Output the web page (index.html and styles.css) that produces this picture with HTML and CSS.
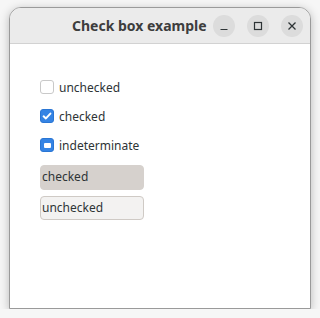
FILE: index.html
```html
<!DOCTYPE html>
<html lang="en">
  <head>
    <meta charset="UTF-8" />
    <title>Check box example</title>
    <link rel="stylesheet" href="styles.css">
  </head>
  <body>
    <div class="window">
      <div class="titlebar">
        <span class="title">Check box example</span>
        <div class="controls">
          <span class="ctl">
            <svg width="10" height="10" viewBox="0 0 10 10"><path d="M1.5 8.5h7" stroke="#2e3436" stroke-width="1.2"/></svg>
          </span>
          <span class="ctl">
            <svg width="10" height="10" viewBox="0 0 10 10"><rect x="1.5" y="1.5" width="7" height="7" fill="none" stroke="#2e3436" stroke-width="1.2"/></svg>
          </span>
          <span class="ctl">
            <svg width="10" height="10" viewBox="0 0 10 10"><path d="M1.5 1.5l7 7M8.5 1.5l-7 7" stroke="#2e3436" stroke-width="1.3"/></svg>
          </span>
        </div>
      </div>
      <div class="content">
        <div class="check-row">
          <span class="box"></span>
          <span class="label">unchecked</span>
        </div>
        <div class="check-row">
          <span class="box on">
            <svg width="14" height="14" viewBox="0 0 14 14"><path d="M3.6 7.3l2.3 2.1 4.5-4.8" fill="none" stroke="#fff" stroke-width="2" stroke-linecap="round" stroke-linejoin="round"/></svg>
          </span>
          <span class="label">checked</span>
        </div>
        <div class="check-row">
          <span class="box on">
            <span class="dash"></span>
          </span>
          <span class="label">indeterminate</span>
        </div>
        <div class="toggle pressed">checked</div>
        <div class="toggle">unchecked</div>
      </div>
    </div>
  </body>
</html>
```

FILE: styles.css
```css
body {
  margin: 0;
  padding: 7px 0 0 9px;
  background: #f6f6f6;
  font-family: "Noto Sans", sans-serif;
  color: #2e3436;
}
.window {
  width: 300px;
  height: 300px;
  border: 1px solid #9a9a9a;
  border-radius: 12px 12px 0 0;
  background: #fff;
  box-shadow: 0 2px 10px rgba(0, 0, 0, 0.25);
  overflow: hidden;
}
.titlebar {
  height: 35px;
  background: #ebebeb;
  border-bottom: 1px solid #d2d2d2;
  display: flex;
  align-items: center;
}
.title {
  font-weight: bold;
  font-size: 14px;
  margin-left: 62px;
  color: #3d3d3d;
}
.controls {
  display: flex;
  gap: 12px;
  margin-left: 6px;
}
.ctl {
  width: 22px;
  height: 22px;
  border-radius: 50%;
  background: #dcdcdc;
  display: flex;
  align-items: center;
  justify-content: center;
}
.content {
  padding: 36px 0 0 30px;
}
.check-row {
  display: flex;
  align-items: center;
  height: 14px;
  margin-bottom: 15px;
}
.box {
  flex: none;
  width: 14px;
  height: 14px;
  border: 1px solid #c9c9c9;
  border-radius: 3px;
  box-sizing: border-box;
  display: flex;
  align-items: center;
  justify-content: center;
  margin-right: 5px;
}
.box.on {
  background: #3584e4;
  border-color: #2a76d4;
}
.box svg {
  flex: none;
}
.dash {
  width: 7px;
  height: 5px;
  background: #fff;
  border-radius: 1px;
}
.label {
  font-size: 12px;
}
.toggle {
  width: 104px;
  height: 24px;
  box-sizing: border-box;
  border: 1px solid #cfcac5;
  border-radius: 4px;
  background: #f3f2f1;
  font-size: 12px;
  line-height: 22px;
  padding-left: 1px;
  margin-bottom: 6px;
}
.toggle.pressed {
  background: #d6d1cd;
  border-color: #d6d1cd;
  height: 25px;
  margin-top: -2px;
}
```
